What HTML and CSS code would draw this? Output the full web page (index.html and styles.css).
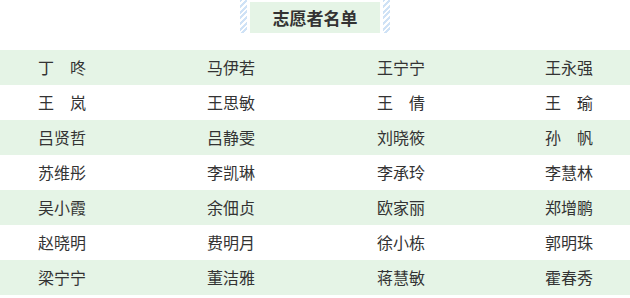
FILE: index.html
```html
<!DOCTYPE html>
<html lang="zh">
<head>
<meta charset="utf-8">
<link rel="stylesheet" href="styles.css">
</head>
<body>
<div class="head">
  <span class="stripe"></span>
  <h1 class="title">志愿者名单</h1>
  <span class="stripe"></span>
</div>
<div class="list">
  <div class="row"><span>丁　咚</span><span>马伊若</span><span>王宁宁</span><span>王永强</span></div>
  <div class="row"><span>王　岚</span><span>王思敏</span><span>王　倩</span><span>王　瑜</span></div>
  <div class="row"><span>吕贤哲</span><span>吕静雯</span><span>刘晓筱</span><span>孙　帆</span></div>
  <div class="row"><span>苏维彤</span><span>李凯琳</span><span>李承玲</span><span>李慧林</span></div>
  <div class="row"><span>吴小霞</span><span>余佃贞</span><span>欧家丽</span><span>郑增鹏</span></div>
  <div class="row"><span>赵晓明</span><span>费明月</span><span>徐小栋</span><span>郭明珠</span></div>
  <div class="row"><span>梁宁宁</span><span>董洁雅</span><span>蒋慧敏</span><span>霍春秀</span></div>
</div>
</body>
</html>
```
FILE: styles.css
```css
html, body {
  margin: 0;
  padding: 0;
  background: #fff;
}
body {
  font-family: "Noto Sans CJK SC", "Noto Sans", sans-serif;
  color: #333;
  width: 630px;
}
.head {
  display: flex;
  justify-content: center;
  align-items: stretch;
  gap: 3px;
  padding-top: 2px;
  height: 31px;
  margin-bottom: 17px;
}
.stripe {
  width: 7px;
  background: repeating-linear-gradient(135deg, #cfe2f6 0 2px, #ffffff 2px 4px);
  margin-top: -2px;
}
.title {
  margin: 0;
  width: 130px;
  background: #e5f4e6;
  font-size: 17px;
  font-weight: bold;
  line-height: 31px;
  text-align: center;
  color: #333;
}
.list {
  display: flex;
  flex-direction: column;
}
.row {
  display: grid;
  grid-template-columns: 169px 170px 168px 1fr;
  padding-left: 38px;
  height: 35px;
  align-items: center;
  font-size: 16px;
  line-height: 35px;
}
.row:nth-child(odd) {
  background: #e5f4e6;
}
```
